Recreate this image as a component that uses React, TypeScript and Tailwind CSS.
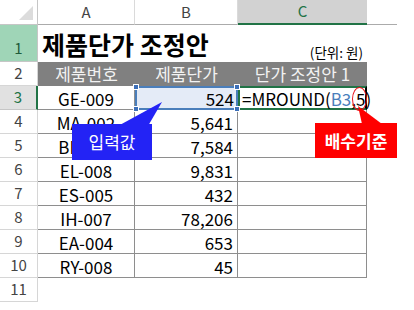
const font = "font-['Noto_Sans_CJK_KR','Noto_Sans',sans-serif]";

const items: [string, string][] = [
  ["GE-009", "524"],
  ["MA-002", "5,641"],
  ["BE-011", "7,584"],
  ["EL-008", "9,831"],
  ["ES-005", "432"],
  ["IH-007", "78,206"],
  ["EA-004", "653"],
  ["RY-008", "45"],
];

function RowHead({ n, active, green }: { n: number; active?: boolean; green?: boolean }) {
  const base = "flex items-center justify-center border-b border-r text-[15px]";
  if (green)
    return <div className={`${base} items-end pb-0.5 border-[#c6c6c6] bg-[#9fd5b7] text-[#1e5c3a]`}>{n}</div>;
  if (active)
    return (
      <div className={`${base} border-b-[#c6c6c6] border-r-2 border-r-[#217346] bg-[#e1e1e1] text-[#217346]`}>{n}</div>
    );
  return <div className={`${base} border-[#d6d6d6] bg-white text-[#444]`}>{n}</div>;
}

function Handle({ className }: { className: string }) {
  return <span className={`absolute h-[6px] w-[6px] border border-white bg-[#3d6fb8] ${className}`} />;
}

export default function App() {
  return (
    <div className={`relative h-[310px] w-[414px] overflow-hidden bg-white ${font} text-black`}>
      <div className="grid w-[397px] grid-cols-[38px_97px_103px_129px_30px] grid-rows-[25px_37px_repeat(9,24px)]">
        {/* column headers */}
        <div className="relative border-r border-b border-[#c6c6c6] bg-white">
          <svg className="absolute right-1 bottom-1" width="14" height="14" viewBox="0 0 14 14">
            <polygon points="14,0 14,14 0,14" fill="#dcdcdc" />
          </svg>
        </div>
        <div className="flex items-center justify-center border-r border-b border-r-[#dadada] border-b-[#ababab] text-[15px] text-[#444]">A</div>
        <div className="flex items-center justify-center border-r border-b border-r-[#dadada] border-b-[#ababab] text-[15px] text-[#444]">B</div>
        <div className="flex items-center justify-center border-b-2 border-b-[#217346] bg-[#d2d2d2] text-[15px] text-[#217346]">C</div>
        <div className="border-b border-[#ababab]" />

        {/* row 1 */}
        <RowHead n={1} green />
        <div className="col-span-3 flex items-end justify-between overflow-hidden pr-[4px] pl-[4px]">
          <span className="pb-[5px] text-[25px] leading-none font-bold">제품단가 조정안</span>
          <span className="pb-[3px] text-[13.5px] leading-none">(단위: 원)</span>
        </div>
        <div />

        {/* row 2 */}
        <RowHead n={2} />
        {["제품번호", "제품단가", "단가 조정안 1"].map((t) => (
          <div key={t} className="flex items-center justify-center bg-[#808080] text-[17px] text-[#f2f2f2]">
            {t}
          </div>
        ))}
        <div />

        {items.map(([code, price], i) => {
          const r = i + 3;
          const first = i === 0;
          return (
            <div key={code} className="contents">
              <RowHead n={r} active={first} />
              <div className="flex items-center justify-center border-r border-b border-[#8e8e8e] pt-[2px] text-[17px]">
                {code}
              </div>
              <div
                className={
                  first
                    ? "relative flex items-center justify-end border-2 border-[#4a7ebb] bg-[#e4ebf7] pt-[2px] pr-[2px] text-[17px]"
                    : "flex items-center justify-end border-r border-b border-[#8e8e8e] pt-[2px] pr-[4px] text-[17px]"
                }
              >
                {price}
                {first && (
                  <>
                    <Handle className="-top-[4px] -left-[4px]" />
                    <Handle className="-top-[4px] -right-[4px]" />
                    <Handle className="-bottom-[4px] -left-[4px]" />
                    <Handle className="-bottom-[4px] -right-[4px]" />
                  </>
                )}
              </div>
              <div
                className={
                  first
                    ? "flex items-center border-2 border-[#217346] border-r-black pt-[2px] pl-[2px] text-[17px] whitespace-nowrap"
                    : "border-r border-b border-[#8e8e8e]"
                }
              >
                {first && (
                  <span>
                    =MROUND(<span className="text-[#4a7ebb]">B3</span>,5)
                  </span>
                )}
              </div>
              <div />
            </div>
          );
        })}

        {/* row 11 */}
        <RowHead n={11} />
        <div className="col-span-4" />
      </div>

      {/* circle around the 5 */}
      <div className="absolute top-[87px] left-[352px] h-[24px] w-[15px] rounded-[50%] border border-[#e8141a]" />

      {/* blue callout */}
      <svg className="absolute top-[100px] left-[110px]" width="60" height="28" viewBox="0 0 60 28">
        <polygon points="8,26 38,26 52,2" fill="#2323f5" />
      </svg>
      <div className="absolute top-[124px] left-[72px] flex h-[36px] w-[80px] items-center justify-center bg-[#2323f5] text-[17px] text-white">
        입력값
      </div>

      {/* red callout */}
      <svg className="absolute top-[104px] left-[352px]" width="40" height="22" viewBox="0 0 40 22">
        <polygon points="6,2 10,20 30,20" fill="#ff0000" />
      </svg>
      <div className="absolute top-[123px] left-[315px] flex h-[35px] w-[82px] items-center justify-center bg-[#ff0000] text-[17px] font-bold text-white">
        배수기준
      </div>
    </div>
  );
}
